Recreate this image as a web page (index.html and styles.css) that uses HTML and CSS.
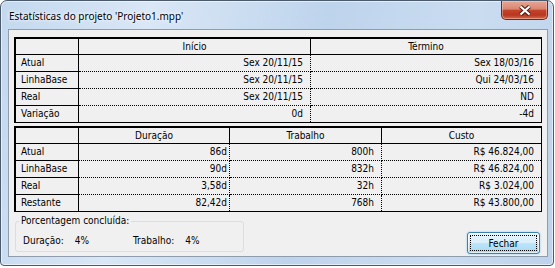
FILE: index.html
```html
<!DOCTYPE html>
<html lang="pt">

<head>
    <meta charset="UTF-8">
    <title>Estatísticas do projeto</title>
    <link rel="stylesheet" href="styles.css">
</head>

<body>
    <!-- janela -->
    <div class="window">
        <!-- barra de título -->
        <div class="titlebar">
            <span class="title">Estatísticas do projeto 'Projeto1.mpp'</span>
            <span class="close">
                <svg width="14" height="11" viewBox="0 0 14 11">
                    <path d="M2.5 1.5 L11.5 9.5 M11.5 1.5 L2.5 9.5" stroke="#4a1d14" stroke-width="4.2" fill="none"/>
                    <path d="M2.5 1.5 L11.5 9.5 M11.5 1.5 L2.5 9.5" stroke="#fff" stroke-width="2.2" fill="none"/>
                </svg>
            </span>
        </div>

        <!-- área do cliente -->
        <div class="client">
            <table class="grid">
                <colgroup>
                    <col style="width:63px">
                    <col style="width:232px">
                    <col>
                </colgroup>
                <tr class="head"><th></th><th>Início</th><th>Término</th></tr>
                <tr><th>Atual</th><td>Sex 20/11/15</td><td>Sex 18/03/16</td></tr>
                <tr><th>LinhaBase</th><td>Sex 20/11/15</td><td>Qui 24/03/16</td></tr>
                <tr><th>Real</th><td>Sex 20/11/15</td><td>ND</td></tr>
                <tr><th>Variação</th><td>0d</td><td>-4d</td></tr>
            </table>

            <table class="grid">
                <colgroup>
                    <col style="width:63px">
                    <col style="width:151px">
                    <col style="width:152px">
                    <col>
                </colgroup>
                <tr class="head"><th></th><th>Duração</th><th>Trabalho</th><th>Custo</th></tr>
                <tr><th>Atual</th><td class="tight">86d</td><td>800h</td><td>R$ 46.824,00</td></tr>
                <tr><th>LinhaBase</th><td class="tight">90d</td><td>832h</td><td>R$ 46.824,00</td></tr>
                <tr><th>Real</th><td class="tight">3,58d</td><td>32h</td><td>R$ 3.024,00</td></tr>
                <tr><th>Restante</th><td class="tight">82,42d</td><td>768h</td><td>R$ 43.800,00</td></tr>
            </table>

            <!-- rodapé -->
            <div class="footer">
                <fieldset class="progress">
                    <legend>Porcentagem concluída:</legend>
                    <div class="pct-row">
                        <div class="pct"><span>Duração:</span><span class="val">4%</span></div>
                        <div class="pct"><span>Trabalho:</span><span class="val">4%</span></div>
                    </div>
                </fieldset>
                <button class="btn">Fechar</button>
            </div>
        </div>
    </div>
</body>

</html>
```

FILE: styles.css
```css
* {
    margin: 0;
    padding: 0;
    box-sizing: border-box;
}

body {
    width: 555px;
    height: 268px;
    background-color: #fff;
    font-family: "DejaVu Sans Condensed", "DejaVu Sans", sans-serif;
    font-stretch: condensed;
    font-size: 10px;
    color: #000;
}

/* moldura da janela */
.window {
    width: 554px;
    height: 266px;
    border: 1px solid #4b5a6c;
    border-radius: 7px 7px 4px 4px;
    background: linear-gradient(100deg, #c3d8ee 0%, #d9e7f6 25%, #bed4ec 55%, #cadcf0 80%, #bdd3eb 100%);
    box-shadow: inset 0 0 0 1px rgba(255, 255, 255, 0.55);
    display: flex;
    flex-direction: column;
    padding: 0 5px 8px 7px;
}

/* barra de título */
.titlebar {
    height: 28px;
    display: flex;
    justify-content: space-between;
    align-items: flex-start;
}

.title {
    font-family: "Noto Sans", sans-serif;
    font-stretch: normal;
    font-size: 10px;
    padding-top: 8px;
    padding-left: 1px;
    text-shadow: 0 0 5px #fff, 0 0 3px #fff;
}

.close {
    width: 47px;
    height: 19px;
    border: 1px solid #6d2a20;
    border-top: none;
    border-radius: 0 0 5px 5px;
    background: linear-gradient(#e6a796 0%, #d98670 45%, #c4432d 52%, #b9361f 78%, #d46b4f 100%);
    box-shadow: inset 0 0 0 1px rgba(255, 210, 200, 0.45);
    display: flex;
    align-items: center;
    justify-content: center;
}

/* área do cliente */
.client {
    flex: 1;
    background-color: #f0f0f0;
    border: 1px solid #8e9cad;
    padding: 7px 5px 0 5px;
}

/* tabelas */
.grid {
    width: 528px;
    table-layout: fixed;
    border-collapse: separate;
    border-spacing: 0;
    border-top: 2px solid #000;
    border-left: 2px solid #000;
    border-right: 1px solid #000;
    border-bottom: 1px solid #000;
    margin-bottom: 3px;
}

.grid th,
.grid td {
    height: 17px;
    font-weight: normal;
    white-space: nowrap;
    line-height: 12px;
    border-right: 1px dotted #000;
    border-bottom: 1px dotted #000;
}

.grid td {
    text-align: right;
    padding-right: 7px;
}

.grid td.tight {
    padding-right: 2px;
}

/* coluna de rótulos */
.grid th {
    text-align: left;
    padding-left: 5px;
    border-right: 1px solid #000;
    border-bottom: 1px solid #000;
}

/* linha de cabeçalho */
.grid .head th {
    height: 16px;
    text-align: center;
    padding-left: 0;
}

.grid th:last-child,
.grid td:last-child {
    border-right: none;
}

.grid tr:last-child th,
.grid tr:last-child td {
    height: 16px;
    border-bottom: none;
}

/* rodapé */
.footer {
    display: flex;
    justify-content: space-between;
    align-items: flex-start;
}

.progress {
    width: 211px;
    height: 37px;
    margin-left: 1px;
    border: 1px solid #d5dfe5;
    border-radius: 3px;
    padding: 0;
}

.progress legend {
    padding: 0 2px;
    margin-left: 3px;
    line-height: 12px;
}

.pct-row {
    display: flex;
    padding: 8px 0 0 7px;
}

.pct {
    width: 110px;
    display: flex;
}

.pct .val {
    margin-left: 11px;
}

/* botão */
.btn {
    width: 73px;
    height: 22px;
    margin-top: 17px;
    margin-right: 2px;
    font-family: inherit;
    font-stretch: condensed;
    font-size: 10px;
    color: #000;
    border: 1px solid #3c7fb1;
    border-radius: 3px;
    background: linear-gradient(#e8f5fc 0%, #d8effb 48%, #bde5fa 52%, #a7d9f5 100%);
    box-shadow: inset 0 0 0 1px rgba(255, 255, 255, 0.6), 0 0 2px #7ec4ee;
    outline: 1px dotted #000;
    outline-offset: -4px;
}
```
